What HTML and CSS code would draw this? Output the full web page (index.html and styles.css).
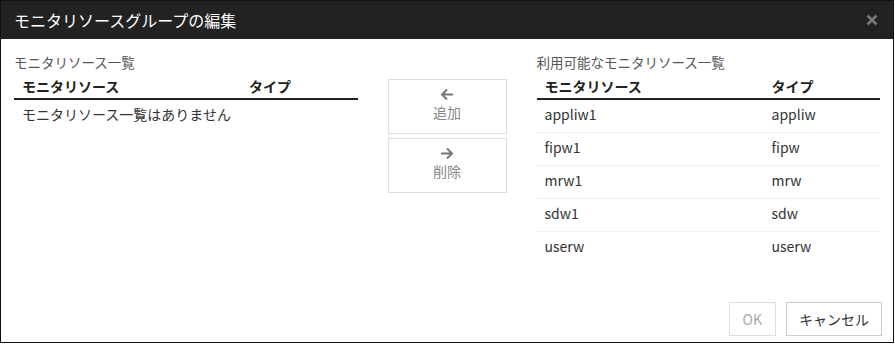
FILE: index.html
```html
<!DOCTYPE html>
<html>
  <head>
    <title>モニタリソースグループの編集</title>
    <link rel="stylesheet" href="styles.css">
  </head>
  <body>
    <div class="dialog">
      <div class="dialog-header">
        <span class="dialog-title">モニタリソースグループの編集</span>
        <svg class="close-button" width="12" height="12" viewBox="0 0 12 12">
          <path d="M1.5 1.5L10.5 10.5M10.5 1.5L1.5 10.5" stroke="#777" stroke-width="2.6"/>
        </svg>
      </div>

      <div class="dialog-body">
        <div class="list-panel">
          <div class="list-label">モニタリソース一覧</div>
          <table class="list-table">
            <thead>
              <tr>
                <th class="col-name">モニタリソース</th>
                <th>タイプ</th>
              </tr>
            </thead>
            <tbody>
              <tr class="empty-row">
                <td colspan="2">モニタリソース一覧はありません</td>
              </tr>
            </tbody>
          </table>
        </div>

        <div class="move-buttons">
          <button class="move-button">
            <svg width="14" height="13" viewBox="0 0 14 13">
              <path d="M13 6.5H2M7 1.5L2 6.5L7 11.5" fill="none" stroke="#777" stroke-width="2"/>
            </svg>
            <span>追加</span>
          </button>
          <button class="move-button">
            <svg width="14" height="13" viewBox="0 0 14 13">
              <path d="M1 6.5H12M7 1.5L12 6.5L7 11.5" fill="none" stroke="#777" stroke-width="2"/>
            </svg>
            <span>削除</span>
          </button>
        </div>

        <div class="list-panel">
          <div class="list-label">利用可能なモニタリソース一覧</div>
          <table class="list-table">
            <thead>
              <tr>
                <th class="col-name">モニタリソース</th>
                <th>タイプ</th>
              </tr>
            </thead>
            <tbody>
              <tr><td>appliw1</td><td>appliw</td></tr>
              <tr><td>fipw1</td><td>fipw</td></tr>
              <tr><td>mrw1</td><td>mrw</td></tr>
              <tr><td>sdw1</td><td>sdw</td></tr>
              <tr><td>userw</td><td>userw</td></tr>
            </tbody>
          </table>
        </div>
      </div>

      <div class="dialog-footer">
        <button class="footer-button" disabled>OK</button>
        <button class="footer-button">キャンセル</button>
      </div>
    </div>
  </body>
</html>
```

FILE: styles.css
```css
body {
  margin: 0;
  font-family: "Noto Sans CJK JP", "Noto Sans", sans-serif;
  font-size: 14px;
  color: #333;
  background-color: #fff;
}

.dialog {
  width: 892px;
  height: 341px;
  border: 1px solid #111;
  display: flex;
  flex-direction: column;
  background-color: #fff;
}

.dialog-header {
  height: 38px;
  background-color: #222;
  display: flex;
  align-items: center;
  justify-content: space-between;
  padding: 0 15px 0 13px;
}

.dialog-title {
  color: #fff;
  font-size: 16px;
  line-height: 20px;
}

.dialog-body {
  flex: 1;
  display: flex;
  align-items: flex-start;
  gap: 30px;
  padding: 14px 13px 0 13px;
}

.list-panel {
  width: 344px;
}

.list-label {
  color: #555;
  font-size: 13.5px;
  line-height: 19px;
}

.list-table {
  width: 100%;
  border-collapse: collapse;
}

.list-table th {
  text-align: left;
  font-weight: bold;
  color: #222;
  padding: 4px 8px 2px 8px;
  line-height: 20px;
  border-bottom: 2px solid #222;
}

.list-table th.col-name {
  width: 211px;
}

.list-table td {
  padding: 4px 8px 8px 8px;
  line-height: 20px;
  border-bottom: 1px solid #eee;
}

.list-table tr:last-child td {
  border-bottom: none;
}

.move-buttons {
  display: flex;
  flex-direction: column;
  gap: 4px;
  margin-top: 26px;
}

.move-button {
  width: 119px;
  height: 55px;
  background-color: #fff;
  border: 1px solid #ddd;
  display: flex;
  flex-direction: column;
  align-items: center;
  justify-content: center;
  gap: 1px;
  font-family: inherit;
  font-size: 14px;
  line-height: 20px;
  color: #888;
  padding: 0 0 3px 0;
}

.dialog-footer {
  display: flex;
  justify-content: flex-end;
  gap: 10px;
  padding: 0 11px 6px 0;
}

.footer-button {
  height: 34px;
  padding: 0 12px;
  background-color: #fff;
  border: 1px solid #ccc;
  font-family: inherit;
  font-size: 14px;
  color: #333;
}

.footer-button:disabled {
  padding: 0 13px;
  color: #aaa;
  border-color: #ddd;
}
```
